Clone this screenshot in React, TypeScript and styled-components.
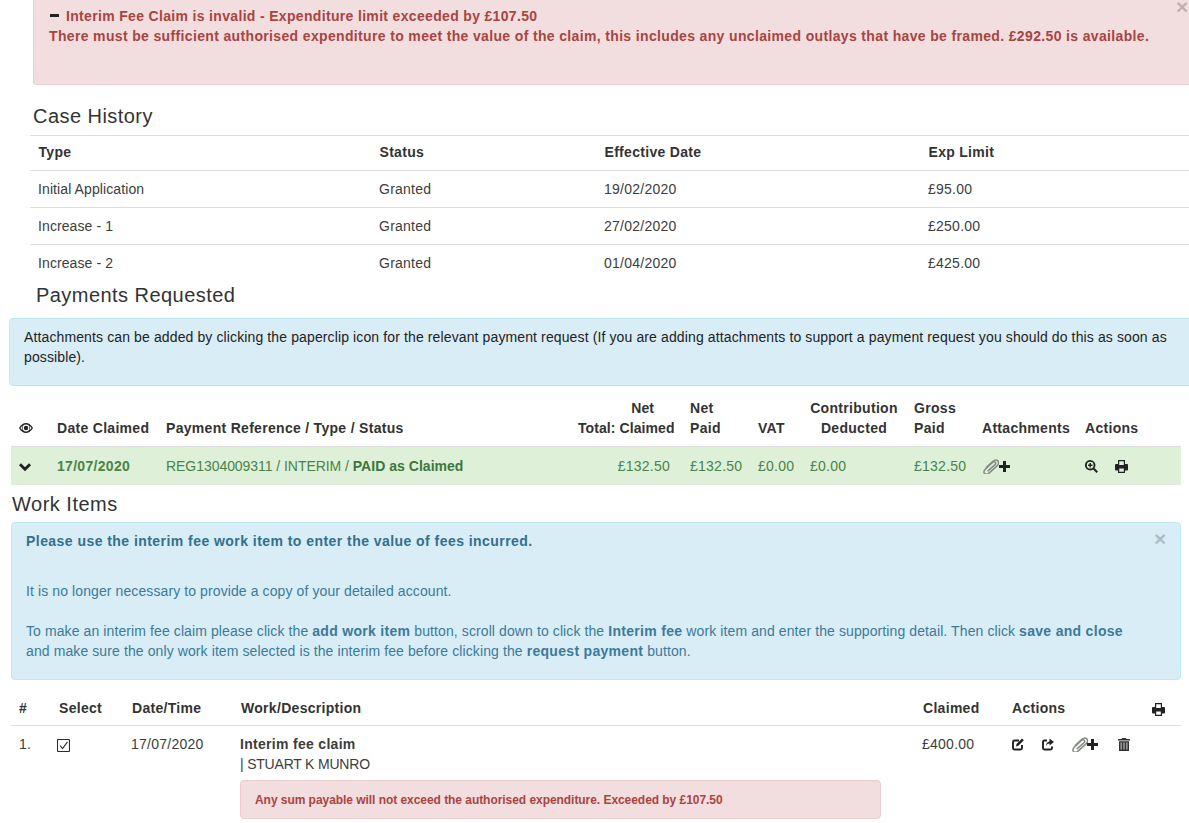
import React from "react";
import styled, { createGlobalStyle } from "styled-components";

const Global = createGlobalStyle`
  html, body { margin: 0; padding: 0; background: #fff; }
  body { font-family: "Liberation Sans", Arial, sans-serif; font-size: 14px; line-height: 20px; color: #3d3d3d; letter-spacing: .1px; overflow: hidden; }
  b, th { letter-spacing: .3px; font-weight: 700; color: inherit; }
  th { color: #333; }
`;
const Page = styled.div`width: 1189px; height: 823px; overflow: hidden;`;
const Alert = styled.div<{ $tone: "danger" | "info" }>`
  box-sizing: border-box;
  border: 1px solid ${p => p.$tone === "danger" ? "#ebccd1" : "#bce8f1"};
  border-radius: 4px;
  background: ${p => p.$tone === "danger" ? "#f2dede" : "#d9edf7"};
  color: ${p => p.$tone === "danger" ? "#a94442" : "#3b7a9a"};
  position: relative;
`;
const TopAlert = styled(Alert)`
  margin-left: 33px; width: 1180px; height: 85px; border-top: 0; border-radius: 0 0 4px 4px;
  padding: 6px 15px; font-weight: 700; letter-spacing: .35px;
`;
const Close = styled.span<{ $top: number; $left: number }>`
  position: absolute; top: ${p => p.$top}px; left: ${p => p.$left}px;
  font-size: 21px; line-height: 1; font-weight: 700; color: #000; opacity: .2; letter-spacing: 0;
`;
const AlertHead = styled.div`display: flex; align-items: center; gap: 6px; padding-left: 1px; letter-spacing: .33px;`;
const Section = styled.h3<{ $left: number; $top: number }>`
  margin: ${p => p.$top}px 0 0 ${p => p.$left}px;
  font-size: 20px; line-height: 24px; font-weight: 400; letter-spacing: 0.45px; color: #333;
`;
const HistoryTable = styled.table`
  border-collapse: collapse; table-layout: fixed; margin-left: 30px; width: 1159px; margin-top: 7px;
  th, td { text-align: left; padding: 8px; height: 37px; box-sizing: border-box; vertical-align: middle; border-top: 1px solid #ddd; }
  th { height: 35px; padding: 5px 8px 7px 8.500px; }
`;
const InfoBar = styled(Alert)`
  margin: 11px 0 0 9px; width: 1190px; height: 68px; padding: 8px 14px; color: #222; letter-spacing: .12px;
`;
const PayTable = styled.table`
  border-collapse: collapse; table-layout: fixed; width: 1170px; margin: 11px 0 0 11px;
  th { height: 50px; padding: 0 8px 8px; vertical-align: bottom; text-align: left; border-bottom: 1px solid #ddd; box-sizing: border-box; line-height: 20px; white-space: nowrap; }
  td { height: 38px; padding: 0 8px; background: #dff0d8; color: #4a8349; box-sizing: border-box; border-bottom: 1px solid #e4e4e4; }
  th.r { text-align: right; letter-spacing: .08px; }
  td.r { text-align: right; padding-right: 12px; }
  th.c { text-align: center; padding: 0 0 8px; }
`;
const NetLabel = styled.div`padding-right: 20px;`;
const EyeCell = styled.span`display: flex; align-items: center; height: 20px;`;
const Num = styled.span`letter-spacing: .25px;`;
const NudgedNum = styled(Num)`display: inline-block; margin-left: -1px;`;
const RefCell = styled.span`letter-spacing: -.05px; b { letter-spacing: .03px; color: #3c763d; }`;
const Sm = styled.span<{ $gap?: number }>`
  display: inline-flex; align-items: center; gap: ${p => p.$gap ?? 0}px; color: #222;
  vertical-align: middle;
`;
const AttachIcons = styled(Sm)`margin-right: 3px; svg:first-child { margin-right: -1px; }`;
const WorkIcons = styled(Sm)`margin-left: -1px;`;
const PrintHead = styled(Sm)`margin-left: 1px;`;
const Work = styled.h3`margin: 7px 0 6px 12px; font-size: 20px; line-height: 24px; font-weight: 400; letter-spacing: .5px; color: #333;`;
const WorkInfo = styled(Alert)`
  margin-left: 11px; width: 1170px; height: 158px; padding: 8px 35px 8px 14px;
  p { margin: 0; }
  p + p { margin-top: 20px; }
`;
const Lead = styled.p`&&{ margin-bottom: 30px; } font-weight: 700; letter-spacing: .45px; color: #31708f;`;
const WorkTable = styled.table`
  border-collapse: collapse; table-layout: fixed; width: 1170px; margin: 10px 0 0 11px;
  th { height: 35px; padding: 1px 8px 0; text-align: left; border-bottom: 1px solid #ddd; box-sizing: border-box; vertical-align: middle; }
  td { padding: 8px 8px; vertical-align: top; }
`;
const WorkDesc = styled.td`&& { padding-left: 7px; }`;
const Who = styled.span`letter-spacing: -.2px;`;
const SmallAlert = styled(Alert)`
  margin-top: 6px; width: 641px; height: 39px; padding: 9px 14px; font-size: 12px; font-weight: 700; letter-spacing: -.05px;
`;
const Check = styled.span`display: block; margin: 5px 0 0 -2px;`;

const Ic = ({ w = 14, h = 14, c = "#222", children, vb = "0 0 14 14" }: any) => (
  <svg width={w} height={h} viewBox={vb} fill={c} style={{ display: "block", flex: "none" }}>{children}</svg>
);
const Minus = () => <Ic w={10} h={6} vb="0 0 10 6"><rect y="1" width="9" height="3" /></Ic>;
const Eye = () => <Ic h={10} vb="0 2 14 10"><path fillRule="evenodd" d="M0 7C2 3.800 4.400 2 7 2s5 1.800 7 5c-2 3.200-4.400 5-7 5S2 10.200 0 7Zm7-3.400a3.400 3.400 0 1 0 0 6.800 3.400 3.400 0 0 0 0-6.800ZM1.500 7c.6.900 1.200 1.600 2 2.200a4.400 4.400 0 0 1 0-4.400c-.8.600-1.400 1.300-2 2.200Zm9-2.200a4.400 4.400 0 0 1 0 4.400c.8-.6 1.400-1.300 2-2.200-.6-.9-1.200-1.600-2-2.200Z" /><circle cx="7" cy="7" r="2.200" /></Ic>;
const Chevron = () => <Ic w={12} h={10} vb="0 0 12 10"><path d="M0 3.200 2 1.200 6 5.200 10 1.200 12 3.200 6 9.200Z" /></Ic>;
const Clip = () => <svg width="17" height="15" viewBox="0 0 14.500 13" fill="none" stroke="#868b84" strokeWidth="1.300" style={{ display: "block", flex: "none" }}><path d="M3.200 7.700 9.300 2c1.500-1.300 3.200-1.400 4.300-.4 1.100 1.100.9 2.800-.5 4.100l-6.800 6.300c-1.300 1.200-3 1.500-4.100.6-1-.9-.8-2.500.5-3.700l6.300-5.900c.8-.7 1.800-.8 2.400-.2.6.6.4 1.500-.4 2.300L4.800 10.500" /></svg>;
const Plus = () => <Ic w={11} h={11} vb="0 0 11 11"><path d="M4 0h3v4h4v3H7v4H4V7H0V4h4Z" /></Ic>;
const Zoom = () => <Ic w={13} h={13} vb="0 0 13 13"><path fillRule="evenodd" d="M5.200 0a5.200 5.200 0 0 1 4.300 8.100L13 11.500 11.500 13 8.100 9.500A5.200 5.200 0 1 1 5.200 0Zm0 1.800a3.400 3.400 0 1 0 0 6.800 3.400 3.400 0 0 0 0-6.800Z" /><path d="M4.500 3h1.400v1.600h1.600V6H5.900v1.600H4.500V6H3V4.600h1.500Z" /></Ic>;
const Print = () => <Ic w={13} h={13} vb="0 0 13 13"><path fillRule="evenodd" d="M3 0h7v4h2a1 1 0 0 1 1 1v4.500a1 1 0 0 1-1 1h-2V13H3v-2.500H1a1 1 0 0 1-1-1V5a1 1 0 0 1 1-1h2Zm1.200 1.200V5h4.600V1.200ZM4.200 8.500v3.300h4.600V8.500Z" /></Ic>;
const Edit = () => <Ic w={13} h={13} vb="0 0 13 13"><path d="M8 2.500H3.500A1.500 1.500 0 0 0 2 4v6a1.500 1.500 0 0 0 1.500 1.500h6A1.500 1.500 0 0 0 11 10V7" fill="none" stroke="#222" strokeWidth="1.900" /><path d="M11 .5 12.800 2.300 7.300 7.800 5 8.500 5.500 6Z" /></Ic>;
const Share = () => <Ic w={13} h={13} vb="0 0 13 13"><path d="M6 2.500H3.500A1.500 1.500 0 0 0 2 4v6a1.500 1.500 0 0 0 1.500 1.500h6A1.500 1.500 0 0 0 11 10V8.500" fill="none" stroke="#222" strokeWidth="1.900" /><path d="M8.500 .5 13 4 8.500 7.500V5.500C7 5.500 5.800 6.300 5 8c0-2.700 1.300-4.300 3.500-4.600Z" /></Ic>;
const Trash = () => <Ic w={12} h={13} c="#333" vb="0 0 12 13"><path fillRule="evenodd" d="M4 0h4l.5 1H12v1.500H0V1h3.500ZM1 3.300h10V13H1Zm1.700 1.200v7h.8v-7Zm2.900 0v7h.8v-7Zm2.900 0v7h.8v-7Z" /></Ic>;
const Box = () => <svg width="13" height="13" viewBox="0 0 13 13" fill="none" style={{ display: "block" }}><rect x=".5" y=".5" width="12" height="12" rx="1" stroke="#2b2b2b" strokeWidth="1.100" /><path d="M3 6.500 5.500 9.500 10.500 2.800" stroke="#2b2b2b" strokeWidth="1.100" /></svg>;

const History = [
  ["Initial Application", "19/02/2020", "£95.00"],
  ["Increase - 1", "27/02/2020", "£250.00"],
  ["Increase - 2", "01/04/2020", "£425.00"],
];

export default function App() {
  return (
    <Page>
      <Global />
      <TopAlert $tone="danger">
        <Close $top={-4} $left={1142}>×</Close>
        <AlertHead><Sm><Minus /></Sm><span>Interim Fee Claim is invalid - Expenditure limit exceeded by £107.50</span></AlertHead>
        <div>There must be sufficient authorised expenditure to meet the value of the claim, this includes any unclaimed outlays that have be framed. £292.50 is available.</div>
      </TopAlert>
      <Section $left={33} $top={19}>Case History</Section>
      <HistoryTable>
        <colgroup><col width="341" /><col width="225" /><col width="324" /><col /></colgroup>
        <thead><tr><th>Type</th><th>Status</th><th>Effective Date</th><th>Exp Limit</th></tr></thead>
        <tbody>
          {History.map(r => (
            <tr key={r[0]}><td>{r[0]}</td><td><Num>Granted</Num></td><td><Num>{r[1]}</Num></td><td><Num>{r[2]}</Num></td></tr>
          ))}
        </tbody>
      </HistoryTable>
      <Section $left={36} $top={1}>Payments Requested</Section>
      <InfoBar $tone="info">Attachments can be added by clicking the paperclip icon for the relevant payment request (If you are adding attachments to support a payment request you should do this as soon as possible).</InfoBar>
      <PayTable>
        <colgroup><col width="38" /><col width="109" /><col width="412" /><col width="112" /><col width="68" /><col width="52" /><col width="104" /><col width="68" /><col width="103" /><col /></colgroup>
        <thead><tr>
          <th><EyeCell><Eye /></EyeCell></th><th>Date Claimed</th><th>Payment Reference / Type / Status</th>
          <th className="r"><NetLabel>Net</NetLabel>Total: Claimed</th><th>Net<br />Paid</th><th>VAT</th>
          <th className="c">Contribution<br />Deducted</th><th>Gross<br />Paid</th><th>Attachments</th><th>Actions</th>
        </tr></thead>
        <tbody><tr>
          <td><Sm><Chevron /></Sm></td><td><b>17/07/2020</b></td><td><RefCell>REG1304009311 / INTERIM / <b>PAID as Claimed</b></RefCell></td>
          <td className="r"><Num>£132.50</Num></td><td><Num>£132.50</Num></td><td><Num>£0.00</Num></td><td><Num>£0.00</Num></td><td><Num>£132.50</Num></td>
          <td><Sm><Clip /><Plus /></Sm></td><td><Sm $gap={17}><Zoom /><Print /></Sm></td>
        </tr></tbody>
      </PayTable>
      <Work>Work Items</Work>
      <WorkInfo $tone="info">
        <Close $top={5} $left={1142}>×</Close>
        <Lead>Please use the interim fee work item to enter the value of fees incurred.</Lead>
        <p>It is no longer necessary to provide a copy of your detailed account.</p>
        <p>To make an interim fee claim please click the <b>add work item</b> button, scroll down to click the <b>Interim fee</b> work item and enter the supporting detail. Then click <b>save and close</b> and make sure the only work item selected is the interim fee before clicking the <b>request payment</b> button.</p>
      </WorkInfo>
      <WorkTable>
        <colgroup><col width="40" /><col width="73" /><col width="109" /><col width="682" /><col width="89" /><col width="139" /><col /></colgroup>
        <thead><tr><th>#</th><th>Select</th><th>Date/Time</th><th>Work/Description</th><th>Claimed</th><th>Actions</th><th><PrintHead><Print /></PrintHead></th></tr></thead>
        <tbody><tr>
          <td>1.</td><td><Check><Box /></Check></td><td><NudgedNum>17/07/2020</NudgedNum></td>
          <WorkDesc><b>Interim fee claim</b><br /><Who>| STUART K MUNRO</Who><SmallAlert $tone="danger">Any sum payable will not exceed the authorised expenditure. Exceeded by £107.50</SmallAlert></WorkDesc>
          <td><NudgedNum>£400.00</NudgedNum></td>
          <td colSpan={2}><WorkIcons $gap={17}><Edit /><Share /><AttachIcons><Clip /><Plus /></AttachIcons><Trash /></WorkIcons></td>
        </tr></tbody>
      </WorkTable>
    </Page>
  );
}
